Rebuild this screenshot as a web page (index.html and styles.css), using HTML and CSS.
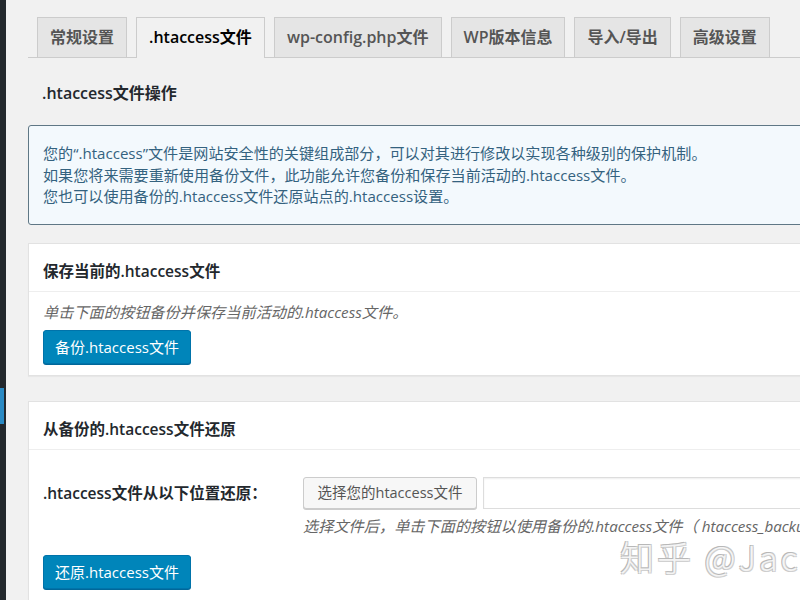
FILE: index.html
```html
<!DOCTYPE html>
<html lang="zh-CN">
<head>
<meta charset="utf-8">
<title>.htaccess文件</title>
<link rel="stylesheet" href="styles.css">
</head>
<body>
<div class="page">
  <aside class="adminbar"><span class="adminbar-active"></span></aside>
  <main class="main">
    <nav class="tabs">
      <a class="tab">常规设置</a>
      <a class="tab tab-active">.htaccess文件</a>
      <a class="tab">wp-config.php文件</a>
      <a class="tab">WP版本信息</a>
      <a class="tab">导入/导出</a>
      <a class="tab">高级设置</a>
    </nav>
    <h2 class="section-title">.htaccess文件操作</h2>
    <div class="info">
      <p>您的“.htaccess”文件是网站安全性的关键组成部分，可以对其进行修改以实现各种级别的保护机制。</p>
      <p>如果您将来需要重新使用备份文件，此功能允许您备份和保存当前活动的.htaccess文件。</p>
      <p>您也可以使用备份的.htaccess文件还原站点的.htaccess设置。</p>
    </div>
    <section class="card card-save">
      <h3 class="card-head">保存当前的.htaccess文件</h3>
      <div class="card-body">
        <p class="desc">单击下面的按钮备份并保存当前活动的.htaccess文件。</p>
        <button class="btn-primary">备份.htaccess文件</button>
      </div>
    </section>
    <section class="card card-restore">
      <h3 class="card-head">从备份的.htaccess文件还原</h3>
      <div class="card-body restore-body">
        <div class="form-row">
          <div class="form-label">.htaccess文件从以下位置还原：</div>
          <div class="form-field">
            <div class="file-row">
              <button class="btn-secondary">选择您的htaccess文件</button>
              <span class="file-input"></span>
            </div>
            <p class="desc">选择文件后，单击下面的按钮以使用备份的.htaccess文件（ htaccess_backup.txt ）还原站点的.htaccess文件。</p>
          </div>
        </div>
        <button class="btn-primary">还原.htaccess文件</button>
      </div>
    </section>
  </main>
  <div class="watermark">知乎 @Jack</div>
</div>
</body>
</html>
```

FILE: styles.css
```css
html, body {
  margin: 0;
  padding: 0;
  overflow: hidden;
  background: #f1f1f1;
}
body {
  font-family: "Open Sans", "Noto Sans CJK SC", sans-serif;
  color: #444;
  width: 800px;
  height: 600px;
}
.page {
  position: relative;
  display: flex;
  width: 1200px;
  height: 600px;
}
.adminbar {
  width: 6px;
  flex: none;
  background: #23282d;
  display: flex;
  flex-direction: column;
  padding-top: 388px;
  box-sizing: border-box;
}
.adminbar-active {
  display: block;
  width: 4px;
  height: 36px;
  background: #2a8ac4;
}
.main {
  flex: 1;
  padding: 17px 0 0 22px;
}
.tabs {
  display: flex;
  gap: 9px;
  padding-left: 9px;
  border-bottom: 1px solid #ccc;
  height: 40px;
}
.tab {
  display: block;
  box-sizing: border-box;
  height: 40px;
  padding: 0 12px;
  border: 1px solid #ccc;
  border-bottom: none;
  background: #e5e5e5;
  color: #555;
  font-size: 16px;
  font-weight: 600;
  line-height: 39px;
  white-space: nowrap;
}
.tab-active {
  background: #f1f1f1;
  color: #000;
  height: 41px;
}
.section-title {
  margin: 24px 0 0 14px;
  font-size: 16px;
  font-weight: 600;
  color: #23282d;
  line-height: 22px;
}
.info {
  margin-top: 21px;
  height: 100px;
  box-sizing: border-box;
  padding: 17px 14px 0;
  background: #f3f9fd;
  border: 1px solid #5f7785;
  border-radius: 3px;
  color: #34627f;
  font-size: 15.1px;
  line-height: 21.5px;
}
.info p {
  margin: 0;
  white-space: nowrap;
}
.card {
  background: #fff;
  border: 1px solid #e2e2e2;
  box-shadow: 0 1px 1px rgba(0,0,0,.04);
}
.card-save {
  margin-top: 18px;
  height: 133px;
  box-sizing: border-box;
}
.card-restore {
  margin-top: 25px;
  height: 230px;
  box-sizing: border-box;
}
.card-head {
  margin: 0;
  height: 48px;
  box-sizing: border-box;
  padding: 16px 14px 0;
  border-bottom: 1px solid #eee;
  font-size: 15.5px;
  font-weight: 600;
  color: #23282d;
  line-height: 22px;
}
.card-body {
  padding: 9px 14px 0;
}
.desc {
  margin: 0;
  font-style: italic;
  font-size: 15.2px;
  line-height: 22px;
  color: #666;
  white-space: nowrap;
}
.btn-primary {
  display: block;
  margin-top: 7px;
  height: 34px;
  width: 148px;
  padding: 0;
  background: #0085ba;
  border: 1px solid #0073aa;
  border-radius: 3px;
  box-shadow: 0 1px 0 #006799;
  color: #fff;
  font-family: inherit;
  font-size: 15px;
  line-height: 32px;
  text-align: center;
}
.restore-body {
  padding-top: 27px;
}
.form-row {
  display: flex;
}
.form-label {
  width: 260px;
  flex: none;
  font-size: 15.5px;
  font-weight: 600;
  color: #23282d;
  line-height: 32px;
}
.file-row {
  display: flex;
  gap: 6px;
  align-items: center;
}
.btn-secondary {
  height: 32px;
  width: 174px;
  padding: 0;
  background: #f7f7f7;
  border: 1px solid #ccc;
  border-radius: 3px;
  box-shadow: 0 1px 0 #ccc;
  color: #555;
  font-family: inherit;
  font-size: 14.5px;
  line-height: 30px;
}
.file-input {
  display: block;
  width: 500px;
  height: 30px;
  border: 1px solid #ddd;
  box-shadow: inset 0 1px 2px rgba(0,0,0,.07);
  background: #fff;
}
.restore-body .desc {
  margin-top: 6px;
}
.restore-body .btn-primary {
  margin-top: 18px;
}
.watermark {
  position: absolute;
  left: 620px;
  top: 540px;
  font-family: "Noto Sans CJK SC", "Open Sans", sans-serif;
  font-size: 34px;
  line-height: 1;
  font-weight: 300;
  letter-spacing: 3px;
  color: #f4f4f4;
  text-shadow: -1px -1px 0 #b8b8b8, 1px 1px 0 #d0d0d0, 1px -1px 0 #c8c8c8, -1px 1px 0 #c8c8c8;
  white-space: nowrap;
}
```
